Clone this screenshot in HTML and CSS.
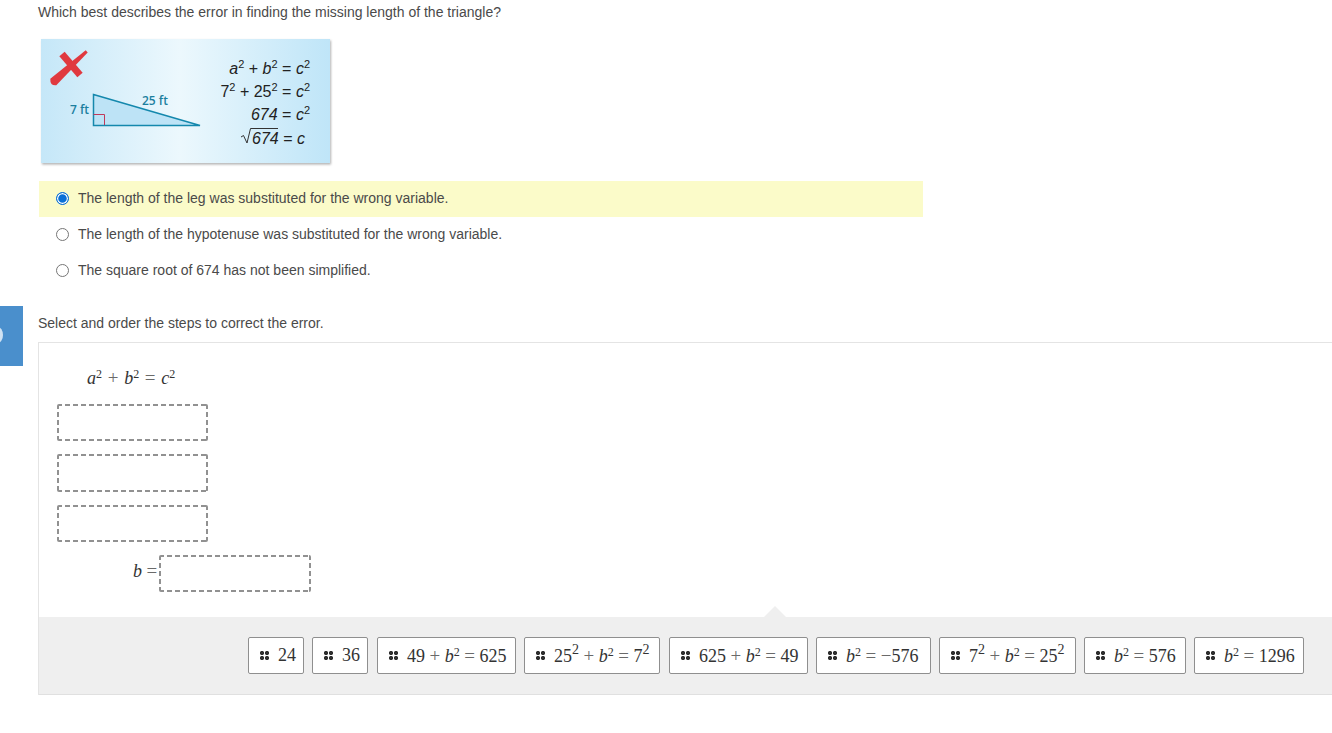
FILE: index.html
```html
<!DOCTYPE html>
<html lang="en">
<head>
<meta charset="utf-8">
<title>Correct the error</title>
<link rel="stylesheet" href="styles.css">
</head>
<body>
<div class="side-tab"><span class="side-dot"></span></div>
<main class="page">
  <p class="prompt prompt-first">Which best describes the error in finding the missing length of the triangle?</p>
  <svg class="figure" width="294" height="130" viewBox="0 0 294 130">
    <defs>
      <linearGradient id="bg" x1="0" x2="1" y1="0" y2="0">
        <stop offset="0" stop-color="#c5e7f8"/>
        <stop offset="0.48" stop-color="#ecf8fd"/>
        <stop offset="1" stop-color="#bfe5f8"/>
      </linearGradient>
      <filter id="sh" x="-5%" y="-5%" width="110%" height="110%">
        <feDropShadow dx="1" dy="1.500" stdDeviation="1" flood-color="#000" flood-opacity="0.3"/>
      </filter>
    </defs>
    <rect x="1" y="0" width="289" height="124" fill="url(#bg)" filter="url(#sh)"/>
    <path d="M22 15 L40 36" fill="none" stroke="#e0393f" stroke-width="7"/>
    <path d="M47.700 13.400 L16.300 46.300 Q10 47 10.300 39.700 L45.700 11.200 Z" fill="#e0393f"/>
    <path d="M53.500 55.500 L160 86.500 L53.500 86.500 Z" fill="#bde3f6" stroke="#1488ad" stroke-width="1.500"/>
    <path d="M53.500 75.500 H64.500 V86" fill="none" stroke="#c0395a" stroke-width="1"/>
    <text class="fig-label" x="30" y="75">7 ft</text>
    <text class="fig-label" x="102" y="66">25 ft</text>
    <g class="fig-math">
      <text x="270" y="35" text-anchor="end"><tspan font-style="italic">a</tspan><tspan class="fig-sup" dy="-6">2</tspan><tspan dy="6"> + </tspan><tspan font-style="italic">b</tspan><tspan class="fig-sup" dy="-6">2</tspan><tspan dy="6"> = </tspan><tspan font-style="italic">c</tspan><tspan class="fig-sup" dy="-6">2</tspan></text>
      <text x="270" y="58" text-anchor="end">7<tspan class="fig-sup" dy="-6">2</tspan><tspan dy="6"> + 25</tspan><tspan class="fig-sup" dy="-6">2</tspan><tspan dy="6"> = </tspan><tspan font-style="italic">c</tspan><tspan class="fig-sup" dy="-6">2</tspan></text>
      <text x="270" y="81" text-anchor="end" font-style="italic">674<tspan font-style="normal"> = </tspan>c<tspan class="fig-sup" font-style="normal" dy="-6">2</tspan></text>
      <text x="265" y="105" text-anchor="end" font-style="italic">674<tspan font-style="normal"> = </tspan>c</text>
    </g>
    <path d="M201 98 L203.500 96.500 L207 104 L210.500 89.500 H238" fill="none" stroke="#333" stroke-width="1"/>
  </svg>

  <ul class="options">
    <li class="option option-selected"><span class="radio radio-on"></span>The length of the leg was substituted for the wrong variable.</li>
    <li class="option"><span class="radio"></span>The length of the hypotenuse was substituted for the wrong variable.</li>
    <li class="option"><span class="radio"></span>The square root of 674 has not been simplified.</li>
  </ul>

  <p class="prompt prompt-second">Select and order the steps to correct the error.</p>

  <section class="panel">
    <div class="work">
      <div class="start-eq math"><i>a</i><sup>2</sup> <span class="op">+</span> <i>b</i><sup>2</sup> <span class="op">=</span> <i>c</i><sup>2</sup></div>
      <div class="slot slot-a"></div>
      <div class="slot slot-b"></div>
      <div class="slot slot-c"></div>
      <div class="answer-row">
        <span class="math answer-label"><i>b</i> <span class="op">=</span></span>
        <div class="slot slot-d"></div>
      </div>
    </div>
    <div class="tray">
      <span class="tray-arrow"></span>
      <div class="tile t-56"><span class="grip"></span><span class="math">24</span></div>
      <div class="tile t-56"><span class="grip"></span><span class="math">36</span></div>
      <div class="tile t-139"><span class="grip"></span><span class="math">49 <span class="op">+</span> <i>b</i><sup>2</sup> <span class="op">=</span> 625</span></div>
      <div class="tile t-136"><span class="grip"></span><span class="math">25<sup class="hi">2</sup> <span class="op">+</span> <i>b</i><sup>2</sup> <span class="op">=</span> 7<sup class="hi">2</sup></span></div>
      <div class="tile t-139"><span class="grip"></span><span class="math">625 <span class="op">+</span> <i>b</i><sup>2</sup> <span class="op">=</span> 49</span></div>
      <div class="tile t-115"><span class="grip"></span><span class="math"><i>b</i><sup>2</sup> <span class="op">=</span> <span class="op">−</span>576</span></div>
      <div class="tile t-137"><span class="grip"></span><span class="math">7<sup class="hi">2</sup> <span class="op">+</span> <i>b</i><sup>2</sup> <span class="op">=</span> 25<sup class="hi">2</sup></span></div>
      <div class="tile t-102"><span class="grip"></span><span class="math"><i>b</i><sup>2</sup> <span class="op">=</span> 576</span></div>
      <div class="tile t-110"><span class="grip"></span><span class="math"><i>b</i><sup>2</sup> <span class="op">=</span> 1296</span></div>
    </div>
  </section>
</main>
</body>
</html>
```
FILE: styles.css
```css
* { box-sizing: border-box; }
html, body { margin: 0; padding: 0; height: 733px; overflow: hidden; background: #fff; }
body { font-family: "Liberation Sans", Arial, sans-serif; font-size: 14px; color: #4a4a4a; }
.page { padding-left: 38px; }
.prompt { margin: 0; line-height: 20px; }
.prompt-first { padding-top: 2px; }
.figure { display: block; margin: 17px 0 0 2px; overflow: visible; }
.fig-label { font-family: "Open Sans", "Liberation Sans", sans-serif; font-size: 12px; font-weight: 600; fill: #1c7f9f; }
.fig-math text { font-family: "Liberation Sans", sans-serif; font-size: 16px; fill: #222; }
.fig-sup { font-size: 11px; }
.options { list-style: none; margin: 12px 0 0 1px; padding: 0; width: 884px; }
.option { display: flex; align-items: center; height: 36px; padding: 0 0 2px 17px; }
.option-selected { background: #fbfbc9; }
.radio { width: 13px; height: 13px; border: 1px solid #767676; border-radius: 50%; margin-right: 9px; background: #fff; flex: none; }
.radio-on { border: 1.500px solid #0a6fd6; background: #0a6fd6; box-shadow: inset 0 0 0 1.200px #fff; }
.prompt-second { margin-top: 25px; line-height: 18px; }
.panel { margin-top: 10px; border-left: 1px solid #e4e4e4; border-top: 1px solid #e4e4e4; width: 1294px; }
.math { font-family: "Liberation Serif", "DejaVu Serif", serif; font-size: 18px; color: #333; white-space: nowrap; }
.math sup { font-size: 12px; line-height: 0; vertical-align: 6px; }
.math sup.hi { font-size: 14px; vertical-align: 8px; }
.op { color: #6a6a6a; font-size: 19px; }
.work { height: 274px; padding: 22px 0 0 18px; }
.start-eq { height: 39px; padding: 1px 0 0 30px; line-height: 24px; word-spacing: 1.200px; }
.slot {
  width: 151px;
  height: 37px;
  border-radius: 2px;
  background:
    repeating-linear-gradient(90deg, #919191 0 5px, transparent 5px 8px) 0 0 / 100% 2px no-repeat,
    repeating-linear-gradient(90deg, #919191 0 5px, transparent 5px 8px) 0 100% / 100% 2px no-repeat,
    repeating-linear-gradient(180deg, #919191 0 5px, transparent 5px 8px) 0 0 / 2px 100% no-repeat,
    repeating-linear-gradient(180deg, #919191 0 5px, transparent 5px 8px) 100% 0 / 2px 100% no-repeat;
}
.slot-a { margin-bottom: 13px; }
.slot-b { height: 38px; margin-bottom: 13px; }
.slot-c { margin-bottom: 13px; }
.answer-row { display: flex; align-items: center; padding-left: 76px; }
.answer-label { width: 26px; padding-bottom: 6px; }
.slot-d { width: 152px; }
.tray { position: relative; height: 78px; background: #efefef; border-bottom: 1px solid #e0e0e0; padding: 20px 28px 0 0; display: flex; justify-content: flex-end; align-items: flex-start; gap: 8px; }
.tray-arrow { position: absolute; left: 725px; top: -11px; width: 0; height: 0; border-left: 11px solid transparent; border-right: 11px solid transparent; border-bottom: 11px solid #efefef; }
.tile { display: flex; align-items: center; gap: 9px; height: 37px; padding-left: 11px; background: #fff; border: 1px solid #8f8f8f; border-radius: 2px; flex: none; }
.grip { width: 9px; height: 9px; flex: none; background: radial-gradient(circle at 2px 2px, #2e2e2e 1.900px, transparent 2.300px) 0 0 / 5px 5px; }
.t-56 { width: 56px; }
.t-139 { width: 139px; margin-left: 1px; }
.t-136 { width: 136px; }
.t-115 { width: 115px; }
.t-137 { width: 137px; }
.t-102 { width: 102px; }
.t-110 { width: 110px; }
.side-tab { position: absolute; left: 0; top: 306px; width: 23px; height: 60px; background: #4a8fcc; overflow: hidden; }
.side-dot { position: absolute; left: -8px; top: 21px; width: 11px; height: 16px; border-radius: 50%; background: #cfe2f3; }
```
